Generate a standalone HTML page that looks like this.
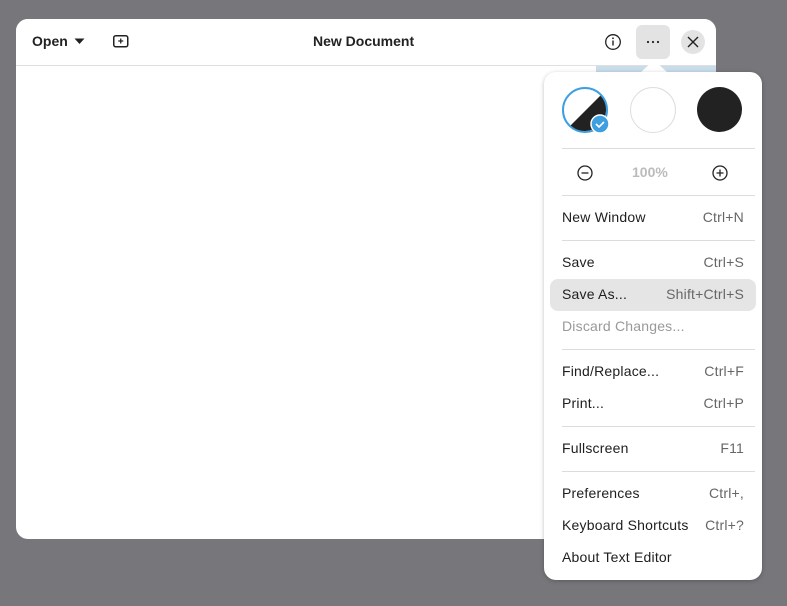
<!DOCTYPE html>
<html><head><style>
body{margin:0;width:787px;height:606px;background:#77767b;position:relative;overflow:hidden;font-family:"Liberation Sans",sans-serif;}
.win{position:absolute;left:16px;top:19px;width:700px;height:520px;background:#fff;border-radius:12px;overflow:hidden;}
.hdr{position:absolute;left:0;top:0;width:700px;height:46px;border-bottom:1px solid #e0e0e0;background:#fff;}
.t{position:absolute;font-size:14px;color:#222;}
.b{font-weight:bold;}
.pop{position:absolute;left:544px;top:72px;width:218px;height:508px;background:#fff;border-radius:12px;box-shadow:0 1px 4px rgba(0,0,0,.25);}
.sep{position:absolute;left:18px;width:193px;height:1px;background:#dcdcdc;}
.row{position:absolute;left:18px;width:182px;font-size:14px;color:#1e1e1e;height:32px;line-height:32px;letter-spacing:0.2px;}
.row span{position:absolute;right:0;color:#666;}
.dis{color:#999!important;}
</style></head><body>
<div class="win">
<div class="hdr">
<div class="t b" style="left:16px;top:14px">Open</div>
<svg style="position:absolute;left:58px;top:19px" width="11" height="7"><path d="M0.5 0.5h10L5.5 6z" fill="#222"/></svg>
<svg style="position:absolute;left:97px;top:16px" width="16" height="13"><rect x="0.75" y="0.75" width="14" height="11" rx="2" fill="none" stroke="#222" stroke-width="1.5"/><path d="M7.75 3.5v5M5.25 6h5" stroke="#222" stroke-width="1.3"/></svg>
<div class="t b" style="left:297px;top:14px">New Document</div>
<svg style="position:absolute;left:588px;top:14px" width="18" height="18"><circle cx="9" cy="9" r="7.3" fill="none" stroke="#222" stroke-width="1.3"/><rect x="8.3" y="7.5" width="1.4" height="5" fill="#222"/><circle cx="9" cy="5.3" r="0.9" fill="#222"/></svg>
<div style="position:absolute;left:620px;top:6px;width:34px;height:34px;border-radius:6px;background:#e3e3e3"></div>
<svg style="position:absolute;left:620px;top:6px" width="34" height="34"><circle cx="12" cy="17" r="1.1" fill="#222"/><circle cx="17" cy="17" r="1.1" fill="#222"/><circle cx="22" cy="17" r="1.1" fill="#222"/></svg>
<div style="position:absolute;left:665px;top:11px;width:24px;height:24px;border-radius:12px;background:#e3e3e3"></div>
<svg style="position:absolute;left:671px;top:17px" width="12" height="12"><path d="M1 1l10 10M11 1L1 11" stroke="#222" stroke-width="1.4"/></svg>
</div>
<div style="position:absolute;left:580px;top:47px;width:120px;height:6px;background:#c8dcea"></div>
</div>
<svg style="position:absolute;left:640px;top:59px" width="28" height="15"><path d="M0 14L14 1L28 14z" fill="#fff"/></svg>
<div class="pop">
<svg style="position:absolute;left:18px;top:14px" width="50" height="50"><circle cx="23" cy="24" r="22" fill="#fff"/><path d="M8 40 L39 9 A22 22 0 0 1 8 40z" fill="#222"/><circle cx="23" cy="24" r="22" fill="none" stroke="#3d9fe0" stroke-width="2"/><circle cx="38" cy="38" r="9" fill="#3d9fe0" stroke="#fff" stroke-width="1.5"/><path d="M34 38l3 3 5-5" fill="none" stroke="#fff" stroke-width="1.6"/></svg>
<div style="position:absolute;left:86px;top:15px;width:44px;height:44px;border-radius:50%;border:1px solid #ddd;background:#fff"></div>
<div style="position:absolute;left:153px;top:15px;width:45px;height:45px;border-radius:50%;background:#222"></div>
<div class="sep" style="top:76px"></div>
<svg style="position:absolute;left:33px;top:93px" width="16" height="16"><circle cx="8" cy="8" r="7" fill="none" stroke="#222" stroke-width="1.3"/><path d="M4.5 8h7" stroke="#222" stroke-width="1.3"/></svg>
<div style="position:absolute;left:88px;top:92px;font-size:14px;font-weight:bold;color:#bbb">100%</div>
<svg style="position:absolute;left:168px;top:93px" width="16" height="16"><circle cx="8" cy="8" r="7" fill="none" stroke="#222" stroke-width="1.3"/><path d="M4.5 8h7M8 4.5v7" stroke="#222" stroke-width="1.3"/></svg>
<div class="sep" style="top:123px"></div>
<div class="row" style="top:129px">New Window<span>Ctrl+N</span></div>
<div class="sep" style="top:168px"></div>
<div style="position:absolute;left:6px;top:207px;width:206px;height:32px;border-radius:8px;background:#e5e5e5"></div>
<div class="row" style="top:174px">Save<span>Ctrl+S</span></div>
<div class="row" style="top:206px">Save As...<span>Shift+Ctrl+S</span></div>
<div class="row dis" style="top:238px">Discard Changes...</div>
<div class="sep" style="top:277px"></div>
<div class="row" style="top:283px">Find/Replace...<span>Ctrl+F</span></div>
<div class="row" style="top:315px">Print...<span>Ctrl+P</span></div>
<div class="sep" style="top:354px"></div>
<div class="row" style="top:360px">Fullscreen<span>F11</span></div>
<div class="sep" style="top:399px"></div>
<div class="row" style="top:405px">Preferences<span>Ctrl+,</span></div>
<div class="row" style="top:437px">Keyboard Shortcuts<span>Ctrl+?</span></div>
<div class="row" style="top:469px">About Text Editor</div>
</div>
</body></html>
